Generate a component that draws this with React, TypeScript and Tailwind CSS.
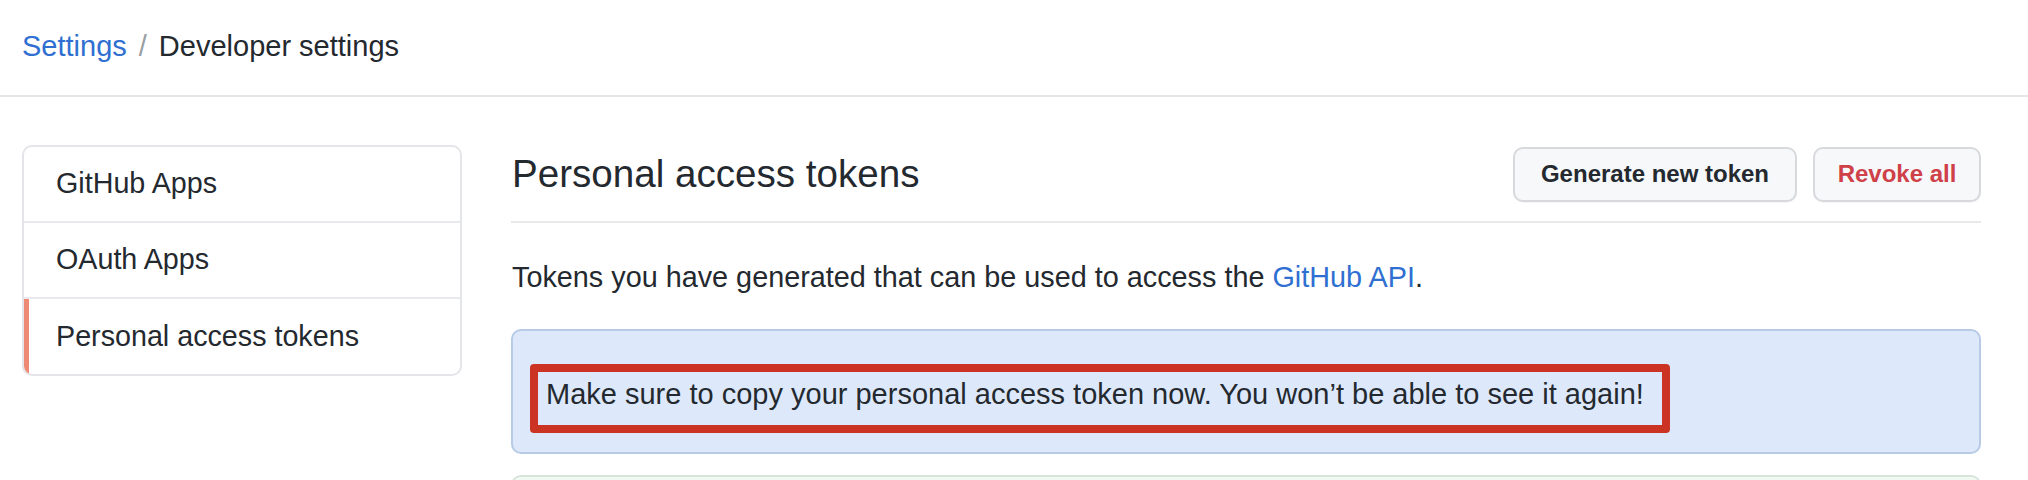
import React from "react";

export default function App() {
  const font = { fontFamily: '"Liberation Sans", Arial, sans-serif' };
  return (
    <div className="w-[2028px] h-[480px] bg-white text-[#24292f] overflow-hidden" style={font}>
      <header className="h-[97px] border-b-2 border-[#e3e5e8] flex items-center pl-[22px] pb-[4px]">
        <nav className="flex items-center text-[29px] leading-[40px]">
          <a className="text-[#2f6fd1]">Settings</a>
          <span className="text-[#9aa0a6] mx-[12px]">/</span>
          <span className="text-[#24292f]">Developer settings</span>
        </nav>
      </header>

      <div className="flex pl-[22px] pr-[47px] pt-[48px] gap-[49px]">
        <aside className="w-[440px] shrink-0">
          <div className="border-2 border-[#e3e5e8] rounded-[10px] overflow-hidden text-[28.7px]">
            <div className="h-[76px] flex items-center pl-[32px] border-b-2 border-[#e8eaed]">GitHub Apps</div>
            <div className="h-[76px] flex items-center pl-[32px] border-b-2 border-[#e8eaed]">OAuth Apps</div>
            <div className="h-[75px] flex items-center pl-[27px] border-l-[5px] border-[#ee8a73]">Personal access tokens</div>
          </div>
        </aside>

        <main className="flex-1 min-w-0">
          <div className="flex items-center justify-between pt-[1px] pb-[19px] border-b-2 border-[#e8e9eb]">
            <h1 className="text-[38.6px] leading-[56px] font-normal ml-[1px]">Personal access tokens</h1>
            <div className="flex gap-[16px]">
              <button className="h-[55px] w-[284px] rounded-[10px] border-2 border-[#d7d9dc] bg-[#f6f8fa] text-[24px] font-bold text-[#24292f] shadow-[0_1px_0_rgba(27,31,36,0.04)]">
                Generate new token
              </button>
              <button className="h-[55px] w-[168px] rounded-[10px] border-2 border-[#d7d9dc] bg-[#f6f8fa] text-[24px] font-bold text-[#cf4048] shadow-[0_1px_0_rgba(27,31,36,0.04)]">
                Revoke all
              </button>
            </div>
          </div>

          <p className="mt-[34px] text-[28.8px] leading-[40px] ml-[1px]">
            Tokens you have generated that can be used to access the <a className="text-[#2f6fd1]">GitHub API</a>.
          </p>

          <div className="mt-[32px] h-[125px] rounded-[10px] border-2 border-[#b7cbe6] bg-[#dde9fb] pt-[33px] pl-[17px]">
            <div className="w-[1140px] h-[69px] border-[8px] border-[#cb3323] rounded-[4px] pl-[8px] pt-[2px] text-[29px] leading-[40px]">
              Make sure to copy your personal access token now. You won’t be able to see it again!
            </div>
          </div>

          <div className="mt-[21px] h-[80px] rounded-[10px] border-2 border-[#d8e3da] bg-[#f0faf2]"></div>
        </main>
      </div>
    </div>
  );
}
